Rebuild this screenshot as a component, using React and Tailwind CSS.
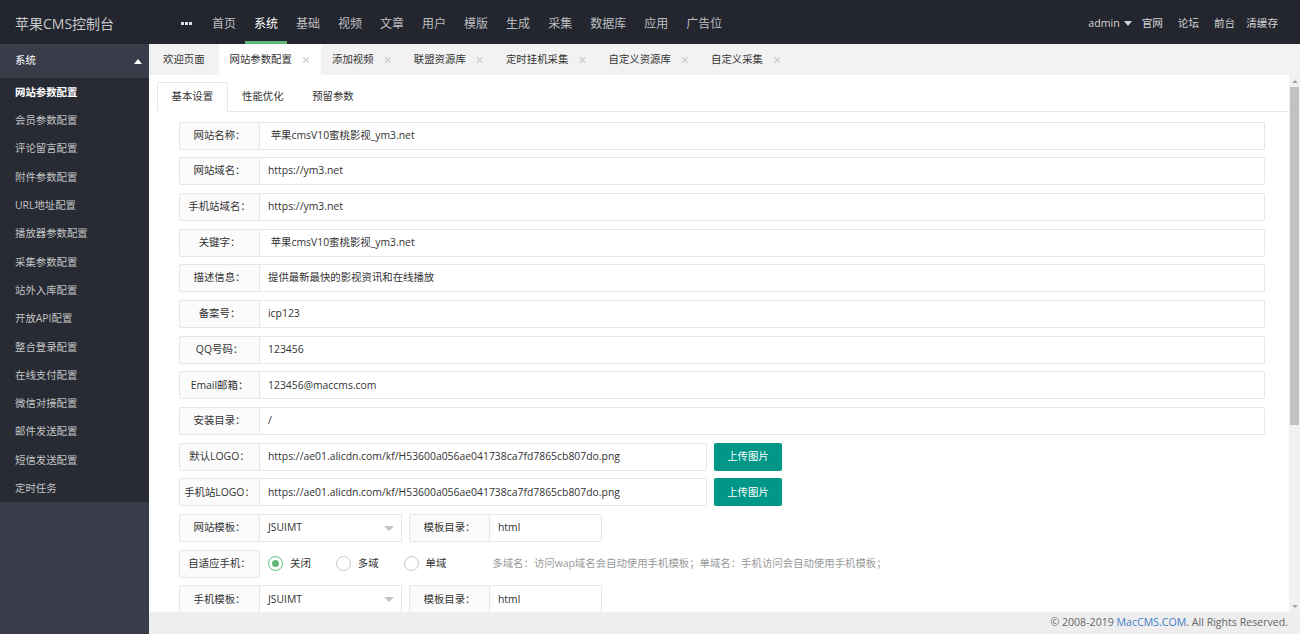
import React from "react";

const FONT = { fontFamily: '"Open Sans", "Noto Sans CJK SC", sans-serif' };

const navItems = ["首页", "系统", "基础", "视频", "文章", "用户", "模版", "生成", "采集", "数据库", "应用", "广告位"];
const sideItems = ["网站参数配置", "会员参数配置", "评论留言配置", "附件参数配置", "URL地址配置", "播放器参数配置", "采集参数配置", "站外入库配置", "开放API配置", "整合登录配置", "在线支付配置", "微信对接配置", "邮件发送配置", "短信发送配置", "定时任务"];
const tabs = ["网站参数配置", "添加视频", "联盟资源库", "定时挂机采集", "自定义资源库", "自定义采集"];
const LOGO = "https://ae01.alicdn.com/kf/H53600a056ae041738ca7fd7865cb807do.png";

function Label({ children }) {
  return (
    <div className="w-[81px] shrink-0 h-full flex items-center justify-center bg-[#fbfbfb] border border-[#e6e6e6] rounded-l-[2px] text-[10.4px] text-[#333] whitespace-nowrap">
      {children}
    </div>
  );
}

function Input({ children, className = "" }) {
  return (
    <div className={"h-full flex items-center pl-[8px] border-y border-r border-[#e6e6e6] bg-white text-[10.4px] text-[#333] whitespace-pre rounded-r-[2px] " + className}>
      {children}
    </div>
  );
}

function Row({ label, children }) {
  return (
    <div className="h-[28px] mb-[7.7px] flex shrink-0">
      <Label>{label}</Label>
      {children}
    </div>
  );
}

function Select({ value }) {
  return (
    <div className="w-[142px] h-full flex items-center justify-between pl-[8px] pr-[7px] border-y border-r border-[#e6e6e6] bg-white text-[10.4px] text-[#333]">
      <span>{value}</span>
      <span className="w-0 h-0 border-l-[5px] border-r-[5px] border-t-[5px] border-l-transparent border-r-transparent border-t-[#c2c2c2]" />
    </div>
  );
}

function Radio({ checked, label }) {
  return (
    <div className="flex items-center mr-[25px]">
      <span className={"w-[15px] h-[15px] rounded-full border flex items-center justify-center " + (checked ? "border-[#5fb878]" : "border-[#c9c9c9]")}>
        {checked && <span className="w-[7px] h-[7px] rounded-full bg-[#5fb878]" />}
      </span>
      <span className="ml-[7px] text-[10.4px] text-[#333]">{label}</span>
    </div>
  );
}

export default function App() {
  return (
    <div style={FONT} className="w-[1300px] h-[634px] flex flex-col overflow-hidden bg-white">
      {/* header */}
      <div className="h-[44px] shrink-0 bg-[#23262e] flex items-stretch">
        <div className="w-[169px] shrink-0 flex items-center pl-[15px] pt-[2px] text-[14px] text-[#c8c9cb]">苹果CMS控制台</div>
        <div className="flex items-stretch">
          <div className="w-[34px] flex items-center justify-center gap-[1px] pt-[2px]">
            <span className="w-[3px] h-[3px] bg-[#e0e0e0]" />
            <span className="w-[3px] h-[3px] bg-[#e0e0e0]" />
            <span className="w-[3px] h-[3px] bg-[#e0e0e0]" />
          </div>
          {navItems.map((n) => (
            <div key={n} className="relative px-[9px] pt-[3px] flex items-center text-[12px]">
              <span className={n === "系统" ? "text-white" : "text-[#bdbec0]"}>{n}</span>
              {n === "系统" && <span className="absolute left-0 right-0 bottom-0 h-[3px] bg-[#5fb878]" />}
            </div>
          ))}
        </div>
        <div className="flex-1" />
        <div className="flex items-center pr-[22px] pt-[3px] text-[10.6px] text-[#d4d5d7]">
          <span>admin</span>
          <span className="ml-[4px] w-0 h-0 border-l-[4px] border-r-[4px] border-t-[5px] border-l-transparent border-r-transparent border-t-[#d4d5d7]" />
          <span className="ml-[10px]">官网</span>
          <span className="ml-[15px]">论坛</span>
          <span className="ml-[15px]">前台</span>
          <span className="ml-[11px]">清缓存</span>
        </div>
      </div>

      <div className="flex-1 flex min-h-0">
        {/* sidebar */}
        <div className="w-[149px] shrink-0 bg-[#393d49] flex flex-col">
          <div className="h-[34px] shrink-0 flex items-center justify-between pl-[15px] pr-[7px] text-[10.4px] text-white">
            <span>系统</span>
            <span className="w-0 h-0 border-l-[4px] border-r-[4px] border-b-[5px] border-l-transparent border-r-transparent border-b-white" />
          </div>
          <div className="bg-[#282b33] flex flex-col">
            {sideItems.map((s, i) => (
              <div key={s} className={"h-[28.3px] flex items-center pl-[15px] pt-[1px] text-[10.4px] " + (i === 0 ? "text-white font-bold" : "text-[#c2c3c5]")}>
                {s}
              </div>
            ))}
          </div>
        </div>

        {/* main */}
        <div className="flex-1 flex flex-col min-w-0">
          <div className="h-[31px] shrink-0 bg-[#f2f2f2] flex items-stretch text-[10.4px] text-[#333]">
            <div className="px-[14px] flex items-center">欢迎页面</div>
            {tabs.map((t, i) => (
              <div key={t} className={"pl-[11px] pr-[10.2px] flex items-center " + (i === 0 ? "bg-white" : "")}>
                <span>{t}</span>
                <span className="ml-[10px] w-[9px] text-[#c8c8c8] text-[14px] leading-none">×</span>
              </div>
            ))}
          </div>

          <div className="flex-1 flex min-h-0">
            <div className="flex-1 min-w-0 overflow-hidden pl-[8px] pt-[7px]">
              <div className="h-[30px] flex items-stretch border-b border-[#e6e6e6] text-[10.4px] text-[#333]">
                <div className="px-[13.5px] -mb-px bg-white border border-[#e6e6e6] border-b-white rounded-t-[2px] flex items-center">基本设置</div>
                <div className="px-[14.5px] flex items-center">性能优化</div>
                <div className="px-[14px] flex items-center">预留参数</div>
              </div>
              <div className="pl-[22px] pr-[24px] pt-[9.5px] flex flex-col">
                <Row label="网站名称："><Input className="flex-1">{" 苹果cmsV10蜜桃影视_ym3.net"}</Input></Row>
                <Row label="网站域名："><Input className="flex-1">https://ym3.net</Input></Row>
                <Row label="手机站域名："><Input className="flex-1">https://ym3.net</Input></Row>
                <Row label="关键字："><Input className="flex-1">{" 苹果cmsV10蜜桃影视_ym3.net"}</Input></Row>
                <Row label="描述信息："><Input className="flex-1">提供最新最快的影视资讯和在线播放</Input></Row>
                <Row label="备案号："><Input className="flex-1">icp123</Input></Row>
                <Row label="QQ号码："><Input className="flex-1">123456</Input></Row>
                <Row label="Email邮箱："><Input className="flex-1">123456@maccms.com</Input></Row>
                <Row label="安装目录："><Input className="flex-1">/</Input></Row>
                <Row label="默认LOGO：">
                  <Input className="w-[447px]">{LOGO}</Input>
                  <div className="ml-[7px] w-[68px] h-full bg-[#009688] rounded-[2px] flex items-center justify-center text-white text-[10.4px]">上传图片</div>
                </Row>
                <Row label="手机站LOGO：">
                  <Input className="w-[447px]">{LOGO}</Input>
                  <div className="ml-[7px] w-[68px] h-full bg-[#009688] rounded-[2px] flex items-center justify-center text-white text-[10.4px]">上传图片</div>
                </Row>
                <Row label="网站模板：">
                  <Select value="JSUIMT" />
                  <div className="ml-[7px] flex h-full">
                    <Label>模板目录：</Label>
                    <Input className="w-[112px]">html</Input>
                  </div>
                </Row>
                <Row label="自适应手机：">
                  <div className="flex items-center pl-[8px]">
                    <Radio checked label="关闭" />
                    <Radio label="多域" />
                    <Radio label="单域" />
                    <span className="ml-[21px] text-[10.4px] text-[#999]">多域名：访问wap域名会自动使用手机模板；单域名：手机访问会自动使用手机模板；</span>
                  </div>
                </Row>
                <Row label="手机模板：">
                  <Select value="JSUIMT" />
                  <div className="ml-[7px] flex h-full">
                    <Label>模板目录：</Label>
                    <Input className="w-[112px]">html</Input>
                  </div>
                </Row>
              </div>
            </div>
            {/* scrollbar */}
            <div className="w-[11px] shrink-0 bg-[#f1f1f1] flex flex-col items-center">
              <div className="h-[12px] flex items-center justify-center">
                <span className="w-0 h-0 border-l-[3px] border-r-[3px] border-b-[3px] border-l-transparent border-r-transparent border-b-[#a3a3a3]" />
              </div>
              <div className="w-[9px] h-[338px] bg-[#c1c1c1]" />
              <div className="flex-1" />
              <div className="h-[12px] flex items-center justify-center">
                <span className="w-0 h-0 border-l-[3px] border-r-[3px] border-t-[3px] border-l-transparent border-r-transparent border-t-[#a3a3a3]" />
              </div>
            </div>
          </div>

          <div className="h-[22px] shrink-0 bg-[#eeeeee] flex items-center justify-end pr-[12px] text-[10.6px] text-[#666]">
            © 2008-2019&nbsp;<span className="text-[#3f7ec8]">MacCMS.COM</span>. All Rights Reserved.
          </div>
        </div>
      </div>
    </div>
  );
}
